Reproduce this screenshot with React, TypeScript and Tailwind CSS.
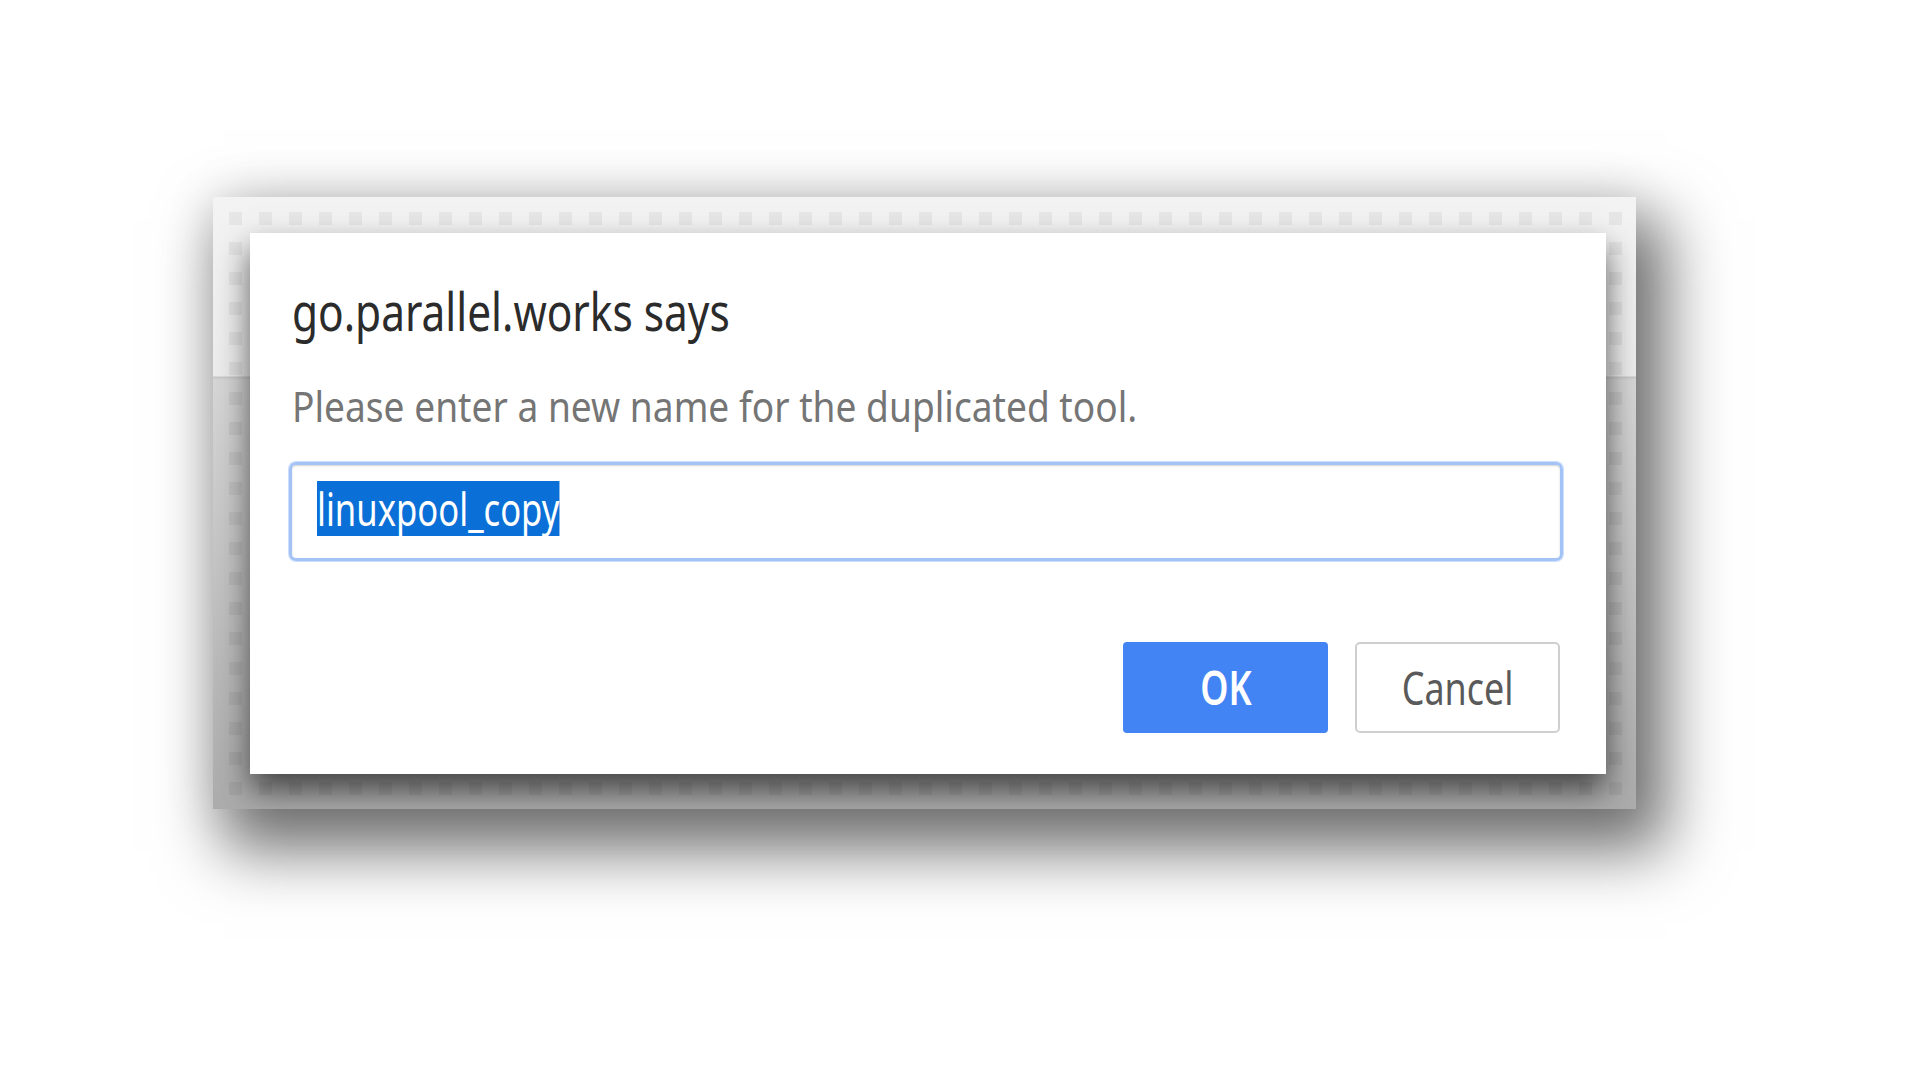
import React from 'react'

const font = { fontFamily: '"Noto Sans", "Open Sans", sans-serif' }

function PromptDialog() {
  return (
    <div
      className="ml-[37px] mt-[36px] flex h-[541px] w-[1356px] flex-col bg-white pl-[39px] pr-[43px] shadow-[0_16px_30px_rgba(0,0,0,0.62)]"
      style={font}
    >
      {/* title */}
      <div className="ml-[3px] mt-[52px] h-[52px] text-[52px] leading-[52px] text-[#2b2b2b]">
        <span className="inline-block origin-left scale-x-[0.815] whitespace-nowrap">go.parallel.works says</span>
      </div>

      {/* message */}
      <div className="ml-[3px] mt-[48px] h-[42px] text-[42px] leading-[42px] text-[#757575]">
        <span className="inline-block origin-left scale-x-[0.884] whitespace-nowrap">
          Please enter a new name for the duplicated tool.
        </span>
      </div>

      {/* input */}
      <div className="mt-[35px] flex h-[99px] w-full items-center rounded-[7px] border-[3px] border-[#a3c3f7] pl-[25px] shadow-[0_0_0_1px_rgba(170,200,250,0.6),inset_0_1px_2px_rgba(0,0,0,0.18)]">
        <span className="mt-[-6px] inline-block h-[55px] origin-left scale-x-[0.753] whitespace-nowrap bg-[#0a6fd6] text-[46px] leading-[55px] text-white">
          linuxpool_copy
        </span>
      </div>

      {/* buttons */}
      <div className="mt-[81px] flex justify-end gap-[27px] pr-[3px]">
        <button className="flex h-[91px] w-[205px] items-center justify-center rounded-[4px] bg-[#4284f3] text-[46px] font-semibold text-white">
          <span className="inline-block scale-x-[0.78]">OK</span>
        </button>
        <button className="flex h-[91px] w-[205px] items-center justify-center rounded-[5px] border-2 border-[#cfcfcf] bg-white text-[46px] text-[#5a5a5a]">
          <span className="inline-block scale-x-[0.78]">Cancel</span>
        </button>
      </div>
    </div>
  )
}

export default function App() {
  return (
    <div className="h-[1080px] w-[1920px] overflow-hidden bg-white pl-[213px] pt-[197px]">
      {/* screenshot frame: greyed page behind the dialog */}
      <div className="h-[612px] w-[1423px] overflow-hidden bg-[image:conic-gradient(at_13px_13px,transparent_75%,rgba(0,0,0,0.05)_0),linear-gradient(180deg,#f3f3f3_0px,#ececec_179px,#c6c6c6_180px,#d6d6d6_183px,#c4c4c4_60%,#acacac_100%)] bg-[length:30px_30px,100%_100%] bg-[position:16px_15px,0_0] shadow-[20px_32px_60px_10px_rgba(0,0,0,0.55),0_0_50px_rgba(0,0,0,0.1)]">
        <PromptDialog />
      </div>
    </div>
  )
}
